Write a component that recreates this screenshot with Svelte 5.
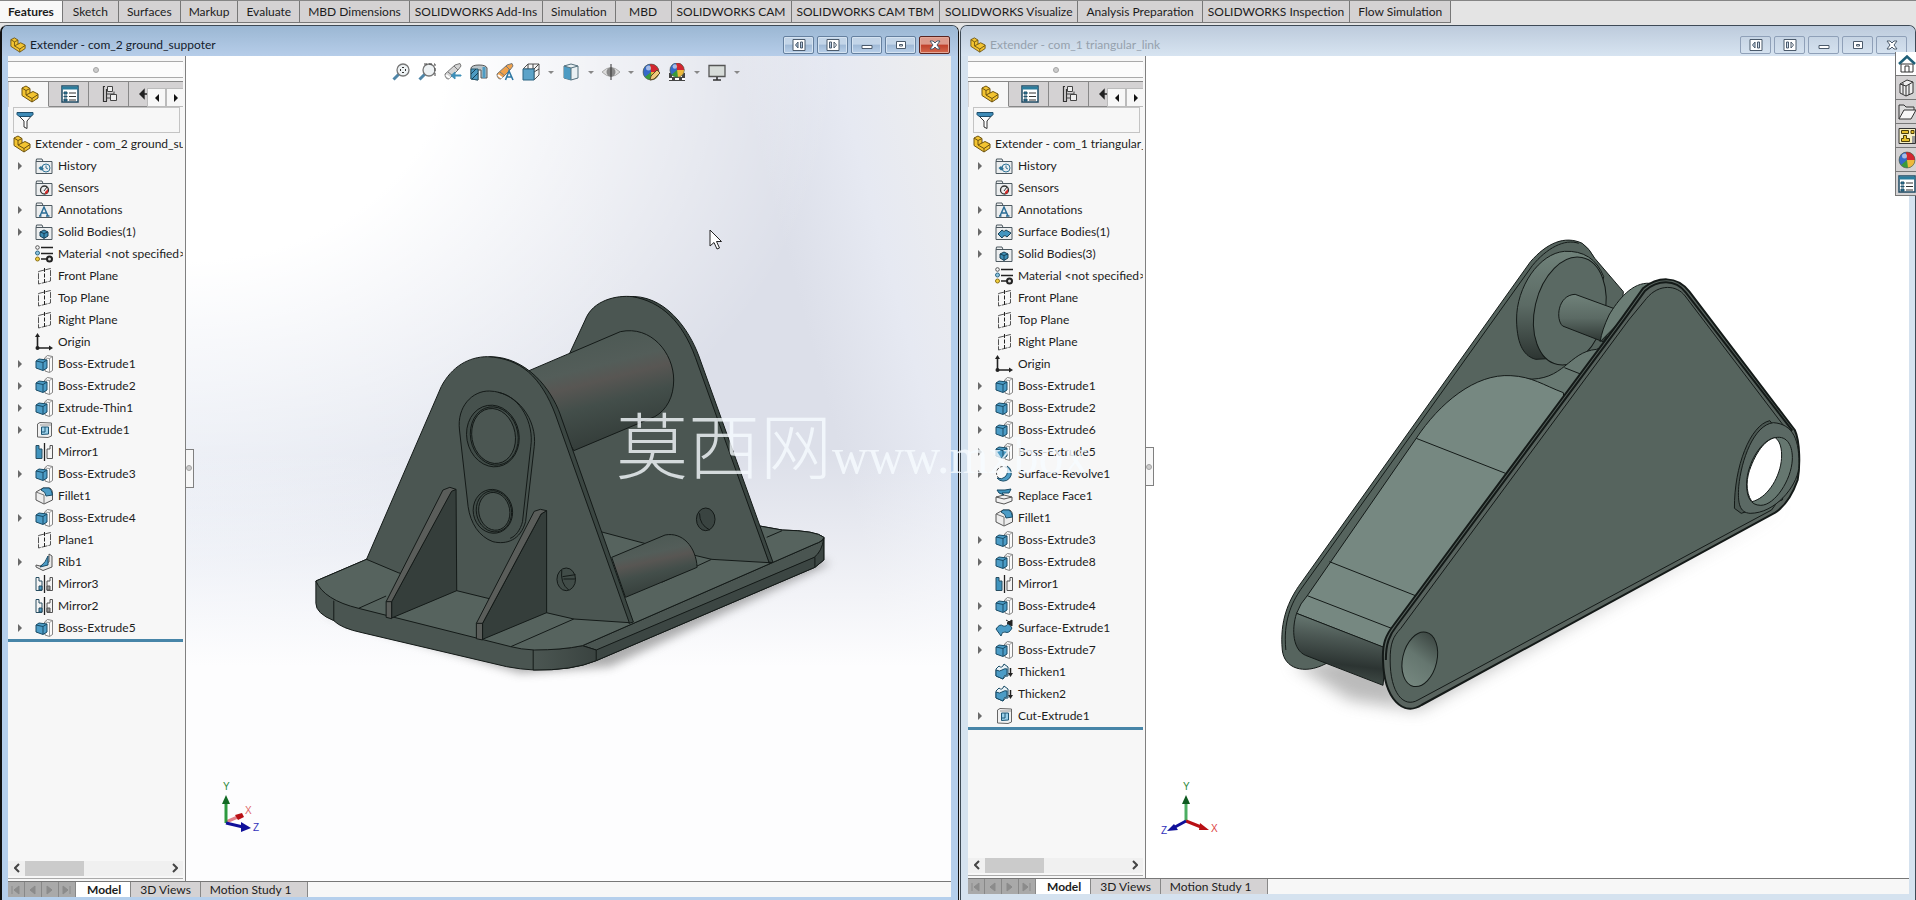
<script lang="ts">
	type Row = [icon: string, label: string, expandable?: boolean];

	const ribbonTabs = [
		'Features',
		'Sketch',
		'Surfaces',
		'Markup',
		'Evaluate',
		'MBD Dimensions',
		'SOLIDWORKS Add-Ins',
		'Simulation',
		'MBD',
		'SOLIDWORKS CAM',
		'SOLIDWORKS CAM TBM',
		'SOLIDWORKS Visualize',
		'Analysis Preparation',
		'SOLIDWORKS Inspection',
		'Flow Simulation'
	];

	const groundRows: Row[] = [
		['history', 'History', true],
		['sensors', 'Sensors'],
		['annotations', 'Annotations', true],
		['solid', 'Solid Bodies(1)', true],
		['material', 'Material <not specified>'],
		['plane', 'Front Plane'],
		['plane', 'Top Plane'],
		['plane', 'Right Plane'],
		['origin', 'Origin'],
		['boss', 'Boss-Extrude1', true],
		['boss', 'Boss-Extrude2', true],
		['boss', 'Extrude-Thin1', true],
		['cut', 'Cut-Extrude1', true],
		['mirror', 'Mirror1'],
		['boss', 'Boss-Extrude3', true],
		['fillet', 'Fillet1'],
		['boss', 'Boss-Extrude4', true],
		['plane', 'Plane1'],
		['rib', 'Rib1', true],
		['mirrorFeature', 'Mirror3'],
		['mirrorFeature', 'Mirror2'],
		['boss', 'Boss-Extrude5', true]
	];

	const linkRows: Row[] = [
		['history', 'History', true],
		['sensors', 'Sensors'],
		['annotations', 'Annotations', true],
		['surface', 'Surface Bodies(1)', true],
		['solid', 'Solid Bodies(3)', true],
		['material', 'Material <not specified>'],
		['plane', 'Front Plane'],
		['plane', 'Top Plane'],
		['plane', 'Right Plane'],
		['origin', 'Origin'],
		['boss', 'Boss-Extrude1', true],
		['boss', 'Boss-Extrude2', true],
		['boss', 'Boss-Extrude6', true],
		['boss', 'Boss-Extrude5', true],
		['revolve', 'Surface-Revolve1', true],
		['replace', 'Replace Face1'],
		['fillet', 'Fillet1'],
		['boss', 'Boss-Extrude3', true],
		['boss', 'Boss-Extrude8', true],
		['mirror', 'Mirror1'],
		['boss', 'Boss-Extrude4', true],
		['surfaceExtrude', 'Surface-Extrude1', true],
		['boss', 'Boss-Extrude7', true],
		['thicken', 'Thicken1'],
		['thicken', 'Thicken2'],
		['cut', 'Cut-Extrude1', true]
	];

	const windows = [
		{ id: 'ground', title: 'Extender - com_2 ground_suppoter', rows: groundRows },
		{ id: 'link', title: 'Extender - com_1 triangular_link', rows: linkRows }
	];

	// second value: has a drop-down arrow
	const viewTools: [string, string, boolean][] = [
		['zoomFit', 'Zoom to Fit', false],
		['zoomArea', 'Zoom to Area', false],
		['previous', 'Previous View', false],
		['section', 'Section View', false],
		['dynamic', 'Dynamic Annotation Views', false],
		['orientation', 'View Orientation', true],
		['display', 'Display Style', true],
		['eye', 'Hide/Show Items', true],
		['appearance', 'Edit Appearance', false],
		['scene', 'Apply Scene', true],
		['monitor', 'View Settings', true]
	];

	const captionButtons = ['Tile left', 'Tile right', 'Minimize', 'Restore', 'Close'];
	const taskTabs = [
		['home', 'Resources'],
		['library', 'Design Library'],
		['folderOpen', 'File Explorer'],
		['palette', 'View Palette'],
		['ball', 'Appearances'],
		['properties', 'Custom Properties']
	];

	let activeRibbon = $state('Features');
	let activeWindow = $state('ground');
	let activeTask = $state('home');
</script>

{#snippet folder()}
	<path d="M1 4.500V16.500H17V4.500H8L7 2H1.500Z" fill="#eceeef" stroke="#4d5960" />
	<path d="M1 4.500H17" stroke="#4d5960" />
{/snippet}

{#snippet ball()}
	<circle cx="9" cy="9" r="8" fill="#3a9a3c" />
	<path d="M9 9L3 14A8 8 0 0 1 8 1Z" fill="#3569c9" />
	<path d="M9 9L8 1A8 8 0 0 1 17 9Z" fill="#d3262f" />
	<path d="M9 9L17 9A8 8 0 0 1 10 17Z" fill="#edb93c" />
	<circle cx="6.500" cy="5" r="2.500" fill="#fff" opacity=".55" />
	<circle cx="9" cy="9" r="8" fill="none" stroke="#555" stroke-width=".6" />
{/snippet}

{#snippet icon(name: string)}
	<svg class="icon" viewBox="0 0 18 18" fill="none" aria-hidden="true">
		{#if name === 'part'}
			<path d="M1 3L5 1L9 3.500V8L12 6.500L17 9V13L11 17L1 10.500Z" fill="#f3c431" stroke="#6d5310" />
			<path d="M1 3L5 5.500V10L11 13.500V17M5 5.500L9 3.500M11 13.500L17 9.500M5 10L9 8" stroke="#6d5310" />
		{:else if name === 'history'}
			{@render folder()}
			<circle cx="11" cy="11" r="4" stroke="#2f7397" />
			<path d="M11 8.500V11L13 12" stroke="#2f7397" />
			<path d="M3.500 11L6 9L9 12L6 13.500Z" fill="#2f7397" />
		{:else if name === 'sensors'}
			{@render folder()}
			<circle cx="9.500" cy="11" r="4" stroke="#333" stroke-width="1.300" />
			<path d="M9 12L12 8" stroke="#333" />
			<path d="M10 13L13 10V14L10 15Z" fill="#d22b2b" />
		{:else if name === 'annotations'}
			{@render folder()}
			<path d="M5 15L9 6L13 15M7 12H11.500M4 15H6.500M11 15H14.500" stroke="#2b6d96" stroke-width="1.500" />
		{:else if name === 'solid'}
			{@render folder()}
			<path d="M5 9L9 7L13 9V13L9 15.500L5 13Z" fill="#3c8db5" stroke="#173f55" />
			<path d="M5 9L9 10.500L13 9M9 10.500V15" stroke="#173f55" />
		{:else if name === 'surface'}
			{@render folder()}
			<path d="M3 11L7 7Q9 10 11 7L16 10L12 14Q9 11 7 15Z" fill="#4295c0" stroke="#173f55" />
		{:else if name === 'material'}
			<path d="M6 2.500H18M6 8.500H18M6 14H12" stroke="#222" stroke-width="1.600" />
			<circle cx="2.500" cy="2.500" r="1.800" stroke="#555" />
			<circle cx="2.500" cy="8" r="2" fill="#8cc3df" stroke="#2f6985" />
			<circle cx="2.500" cy="14" r="2" fill="#f2cf3e" stroke="#8c7217" />
			<circle cx="14.500" cy="14" r="2.500" fill="#ddd" stroke="#222" stroke-width="2" />
		{:else if name === 'plane'}
			<path d="M3.500 4.500L15.500 1.500V14L3.500 17Z" stroke="#555" stroke-dasharray="6 1" />
			<path d="M9.500 1V17.500" stroke="#222" stroke-dasharray="4 1.500" />
		{:else if name === 'origin'}
			<path d="M2.500 3V15H15" stroke="#222" stroke-width="1.600" />
			<path d="M0 4L2.500 0L5 4ZM14 12.500L18 15L14 17.500Z" fill="#222" />
			<circle cx="2.500" cy="15" r="2" fill="#222" />
		{:else if name === 'boss'}
			<path d="M9.500 3L12.500 .5L17.500 1.500V15.500L14.500 17.500L10 16Z" fill="#fafafa" stroke="#666" stroke-width=".8" />
			<path d="M14.500 3.500V17M10 3L14.500 3.500L17.500 1.500" stroke="#888" stroke-width=".8" />
			<path d="M1 6L4 4L12 5V13L8 15.500L1 13Z" fill="#4c9cc6" stroke="#184b66" />
			<path d="M1 6L8 7.500L12 5M8 7.500V15" stroke="#184b66" />
		{:else if name === 'cut'}
			<path d="M2.500 3L5 1.500L16.500 2V15L13 16.500L2.500 16Z" fill="#f1f1f1" stroke="#666" />
			<path d="M5 4H16" stroke="#999" />
			<path d="M6.500 6H13.500V13L6.500 13.500Z" fill="#9bd0ea" stroke="#1d5675" />
			<path d="M10 6V11H6.500" stroke="#1d5675" />
		{:else if name === 'mirror' || name === 'mirrorFeature'}
			<path d="M1 2.500H4V6H7V15.500H1Z" fill={name === 'mirror' ? '#3f93bd' : '#f4f4f4'} stroke="#264c60" />
			<path d="M17.500 2.500H15V6H12V15.500H17.500Z" fill="#f4f4f4" stroke="#555" />
			<path d="M9.500 0V18" stroke="#222" stroke-width="1.300" />
			{#if name === 'mirrorFeature'}
				<path d="M4 11H7V15H4Z" fill="#4c9cc6" stroke="#264c60" />
				<path d="M12 11H15V15H12Z" fill="#999" stroke="#555" />
			{/if}
		{:else if name === 'fillet'}
			<path d="M1 5L8 1H15Q17.500 3 17.500 6V13L9 17L1 13Z" fill="#ededed" stroke="#555" />
			<path d="M8 1L14 1Q17 3 17.500 8L11 9Q11 5 6 3Z" fill="#4c9cc6" stroke="#184b66" />
			<path d="M1 5L9 8V17" stroke="#777" />
		{:else if name === 'rib'}
			<path d="M14 1L17 3V14L8 17.500L1 14V12L5 13L14 9Z" fill="#e8e8e8" stroke="#555" />
			<path d="M13 3V12L5 14Q11 9 13 3Z" fill="#4c9cc6" stroke="#184b66" />
		{:else if name === 'revolve'}
			<circle cx="8" cy="8" r="6.500" fill="#fafafa" stroke="#444" stroke-dasharray="3 1.500" />
			<path d="M12 1A8 8 0 1 1 2 13Q7 15 10 12Q14 8 12 1Z" fill="#4c9cc6" stroke="#184b66" />
		{:else if name === 'replace'}
			<path d="M1 10L9 8L17 10V14L9 17L1 15Z" fill="#f1f1f1" stroke="#555" />
			<path d="M1 10L9 12L17 10" stroke="#555" />
			<path d="M2 3H10L16 2L14 6H7L9 8L4 6Z" fill="#3f93bd" stroke="#184b66" />
		{:else if name === 'surfaceExtrude'}
			<path d="M1 10Q5 4 8 7Q12 8 13 4L17 9Q14 15 10 13Q7 12 6 17Z" fill="#4c9cc6" stroke="#184b66" />
			<path d="M11 1L16 4M17 1V7L12 4Z" fill="#222" stroke="#222" />
		{:else if name === 'thicken'}
			<path d="M1 6L4 3Q7 6 9 1L13 4V13Q10 12 8 16L1 13Z" fill="#e9f2f6" stroke="#184b66" />
			<path d="M1 7Q5 9 7 7Q10 5 12 6V12Q9 11 8 16L1 13Z" fill="#4c9cc6" stroke="#184b66" />
			<path d="M15.500 5V11" stroke="#222" stroke-width="1.500" />
			<path d="M13 10H18L15.500 14Z" fill="#222" />
		{:else if name === 'properties'}
			<path d="M1 1H17V17H1Z" fill="#fff" stroke="#1f4a63" stroke-width="1.500" />
			<path d="M1 3H17" stroke="#2b7d9d" stroke-width="3" />
			<path d="M3 7H6V9H3ZM3 11H6V12H3ZM3 14H6V16H3Z" fill="#2e86ab" stroke="#1f4a63" />
			<path d="M8 8H15M8 11.500H15M8 15H15" stroke="#333" />
		{:else if name === 'config'}
			<path d="M2.500 1V17M2.500 1.500H4M2.500 16.500H6M5.500 4V16" stroke="#333" stroke-width="1.200" />
			<path d="M6.500 1.500H11.500V6.500H6.500ZM9.500 9.500H15.500V15.500H9.500Z" fill="#eee" stroke="#444" />
			<path d="M6 9H13V6.500M6 13H9" stroke="#444" />
		{:else if name === 'dim'}
			<path d="M9 3V15M1 9H9M5 5L1 9L5 13Z" stroke="#222" stroke-width="1.400" fill="#222" />
		{:else if name === 'filter'}
			<path d="M1 3L8 10V16L11 17.500V10L17 3" fill="#fff" stroke="#333" />
			<path d="M1 1.500H17V3.500L15 5.500H3L1 3.500Z" fill="#3e8bb7" stroke="#1f4f6c" />
		{:else if name === 'zoomFit' || name === 'zoomArea'}
			<path d="M7 11L1.500 16.500" stroke="#4f86a8" stroke-width="3" />
			<circle cx="11" cy="7" r="6" fill="#eef2f4" stroke="#777" stroke-width="1.300" />
			{#if name === 'zoomFit'}
				<path d="M8 7H9M13 7H14M11 4V5M11 9V10" stroke="#333" stroke-width="2" />
			{:else}
				<path d="M6 1H17V13" stroke="#444" stroke-dasharray="3 2" />
			{/if}
		{:else if name === 'previous' || name === 'dynamic'}
			<path d="M1 11L11 2L16 .500L17 3L14 7L5 16Q1 16 1 11Z" fill={name === 'dynamic' ? '#f0a24c' : '#d4d4d4'} stroke="#777" />
			<path d="M4 9L9 13M10 3L14 7" stroke="#777" />
			<path d="M2 12L6 15" stroke="#fff" stroke-width="2" />
			{#if name === 'previous'}
				<path d="M17 13H11V16L7 12.500L11 9V12H17Z" fill="#3f8fb8" stroke="#3f8fb8" />
			{:else}
				<path d="M9.500 17L13 8L17 17M11 14H16" stroke="#2d77a3" stroke-width="1.600" />
			{/if}
		{:else if name === 'section'}
			<path d="M1 5Q2 2 9 2Q16 2 17 5V15L11 15V7H8V17L1 16Z" fill="#b9c3c8" stroke="#555" />
			<path d="M1 6H8V17L1 16Z" fill="#4d9bc3" stroke="#24586f" />
			<path d="M1 11L6 6M2 16L8 10" stroke="#173f55" />
			<path d="M14 4V15" stroke="#4d9bc3" stroke-width="3" />
		{:else if name === 'orientation'}
			<path d="M1 6L6 1H17V12L12 17V6Z" fill="#f5f5f5" stroke="#555" />
			<path d="M12 6L17 1M6 1V6M11 1V6M12 9L17 6" stroke="#444" />
			<path d="M1 6H12V17H1Z" fill="#5ba3c9" stroke="#2d6482" />
		{:else if name === 'display'}
			<path d="M2 3L9 1L16 3V15L9 17L2 15Z" fill="#e9f0f3" stroke="#55707d" />
			<path d="M2 3L9 5V17L2 15Z" fill="#4d9bc3" />
			<path d="M2 3L9 5L16 3M9 5V17" stroke="#55707d" />
		{:else if name === 'eye'}
			<path d="M0 9Q9 0 18 9Q9 18 0 9Z" fill="#dcdcdc" stroke="#aaa" />
			<circle cx="9" cy="9" r="4.500" fill="#888" />
			<path d="M9 1V17" stroke="#333" />
		{:else if name === 'appearance'}
			{@render ball()}
			<path d="M8 17L9 13L15 7L18 10L12 16Z" fill="#efc97d" stroke="#5c4a28" />
		{:else if name === 'scene'}
			<path d="M1 10H17V18H1Z" fill="#444" />
			<path d="M4 12H7V14H4ZM11 12H14V14H11ZM1 15H4V17H1ZM14 15H17V17H14ZM7 15H11V17H7Z" fill="#fff" />
			<g transform="translate(1 -1) scale(.9)">{@render ball()}</g>
		{:else if name === 'monitor'}
			<path d="M1 2.500H17V13.500H1Z" fill="#d7dcd9" stroke="#555" stroke-width="1.300" />
			<path d="M9 14V17M5 17H13" stroke="#333" stroke-width="1.600" />
		{:else if name === 'home'}
			<path d="M3 9H15V17H3Z" fill="#fff" stroke="#333" />
			<path d="M7 17V11H11V17" stroke="#333" />
			<path d="M1 9L9 1.500L17 9" stroke="#1f5f78" stroke-width="2.500" />
		{:else if name === 'library'}
			<path d="M2 5L9 1L15 3V14L8 17L2 14Z" fill="#eee" stroke="#333" />
			<path d="M2 5L8 7L15 3M8 7V17M5 4V15M11 5V16" stroke="#333" />
		{:else if name === 'folderOpen'}
			<path d="M1 16V2H6L8 4H16V7" fill="#ddd" stroke="#333" />
			<path d="M1 16L6 7H18L13 16Z" fill="#f7f7f7" stroke="#333" />
		{:else if name === 'palette'}
			<path d="M1 1.500H17.500V16.500H1Z" fill="#f7f0c5" stroke="#333" />
			<path d="M3.500 3.500H10.500V6.500H3.500ZM13 3.500H16V6.500H13ZM3.500 14.500V11.500H5.500V8.500H8.500V11.500H11.500V14.500Z" fill="#e7c12d" stroke="#4c3f0a" />
			<path d="M14 9H17V16H14Z" fill="#999" />
		{:else if name === 'ball'}
			{@render ball()}
		{/if}
	</svg>
{/snippet}

{#snippet captionGlyph(i: number)}
	<svg width="14" height="12" viewBox="0 0 14 12" fill="#fff" stroke="#4b5a6b" aria-hidden="true">
		{#if i === 0}
			<path d="M1 .5H13V11.500H1ZM8.500 3V9H10.500V3ZM6 3L3.500 6L6 9Z" />
		{:else if i === 1}
			<path d="M1 .5H13V11.500H1ZM3.500 3V9H5.500V3ZM8 3L10.500 6L8 9Z" />
		{:else if i === 2}
			<path d="M2 6.500H12V9.500H2Z" />
		{:else if i === 3}
			<path d="M2.500 2.500H11.500V9.500H2.500ZM5.500 5.500H8.500V7H5.500Z" />
		{:else}
			<path d="M2 2H5L7 4L9 2H12L9 6L12 10H9L7 8L5 10H2L5 6Z" />
		{/if}
	</svg>
{/snippet}

{#snippet groundModel()}
	<svg class="model ground" viewBox="-3 -63 1568 1260" preserveAspectRatio="none" role="img" aria-label="Ground supporter">
		<defs>
			<linearGradient id="pin" x1="0.350" y1="0" x2="0.650" y2="1">
				<stop offset="0" stop-color="#4b5853" />
				<stop offset=".3" stop-color="#535d59" />
				<stop offset=".42" stop-color="#585653" />
				<stop offset=".6" stop-color="#434e4a" />
				<stop offset="1" stop-color="#303835" />
			</linearGradient>
			<linearGradient id="corner" x1="0" x2="1">
				<stop offset="0" stop-color="#4b5652" />
				<stop offset="1" stop-color="#3a4340" />
			</linearGradient>
			<filter id="soft"><feGaussianBlur stdDeviation="14" /></filter>
		</defs>
		<path class="shade" d="M60 1000L640 1180L900 1160L1540 850L1400 800L700 1100Z" />
		<g class="lines">
			<path fill="#4a5551" d="M46 903L193 838L880 750L1335 738L1400 750Q1500 752 1521 772V840L1495 862L860 1142Q790 1172 680 1170Q640 1168 600 1160L180 1058Q120 1045 98 1022Q46 1000 46 970Z" />
			<path fill="#3c4643" d="M820 1097L858 1108L1495 830L1521 772V840L1495 862L860 1142Z" />
			<path fill="#4a5551" d="M820 1097L1495 792Q1518 784 1521 775Q1515 815 1493 832L860 1110Z" />
			<path fill="url(#corner)" d="M677 1108Q760 1110 820 1097L860 1110V1142Q790 1172 677 1170Z" />
			<path fill="#56635e" d="M46 903L193 838L880 750L1335 738L1400 750Q1500 752 1521 772Q1518 784 1495 792L820 1097Q760 1110 680 1110Q640 1108 612 1100L170 985Q70 960 46 903Z" />
			<path d="M98 962V1022M1495 832V862M1400 752L1355 772M170 985L250 948" fill="none" />
			<path fill="#3b4642" d="M950 50C1060 40 1130 150 1158 228L1373 846L1362 850L1145 235Z" />
			<path fill="#4b5652" d="M700 700L782 222L828 120C850 60 920 45 965 50C1050 65 1110 125 1148 232L1362 848L1195 838L1000 790L880 757Z" />
			<ellipse fill="#3a4441" cx="1178" cy="718" rx="27" ry="34" />
			<path d="M1160 700Q1160 735 1190 750M1050 907L1195 838" fill="none" />
			<path fill="url(#pin)" d="M665 272L930 155C1020 135 1085 220 1085 300C1085 350 1065 390 1030 410L795 512Z" />
			<path fill="url(#pin)" d="M905 832L1060 765C1110 755 1150 800 1153 862L945 952Z" />
			<path fill="#3b4642" d="M550 230C660 230 730 330 755 402L968 1026L955 1030L700 420Z" />
			<path fill="#4b5652" d="M193 838L410 320C440 260 490 230 545 230C640 235 700 290 742 405L956 1028L795 1017L715 998L455 932L285 878Z" />
			<path d="M463 450C455 380 500 332 550 333C630 335 690 420 680 500L655 725C640 780 600 795 560 785C520 770 495 730 488 680Z" fill="#46514d" />
			<path d="M575 337C640 350 680 430 670 500L646 725C640 750 625 770 610 775" fill="none" />
			<ellipse fill="#404b47" cx="560" cy="468" rx="76" ry="93" transform="rotate(-10 560 468)" />
			<ellipse fill="#4b5652" cx="562" cy="468" rx="63" ry="83" transform="rotate(-10 562 468)" />
			<ellipse cx="564" cy="468" rx="69" ry="88" fill="none" transform="rotate(-10 564 468)" />
			<ellipse fill="#404b47" cx="560" cy="694" rx="57" ry="66" transform="rotate(-10 560 694)" />
			<ellipse fill="#4b5652" cx="564" cy="694" rx="45" ry="57" transform="rotate(-10 564 694)" />
			<ellipse cx="563" cy="694" rx="51" ry="62" fill="none" transform="rotate(-10 563 694)" />
			<ellipse fill="#414c48" cx="773" cy="898" rx="27" ry="34" />
			<path d="M760 870Q755 910 780 930M762 890L800 884M765 897H800" fill="none" />
			<path fill="#353e3b" d="M440 632L453 628L455 932L266 1014V965Z" />
			<path fill="#5a5d5a" d="M415 630L435 622L453 628L440 634L266 965V1016L250 1012V965Z" />
			<path fill="#353e3b" d="M700 702L716 692V998L530 1078V1030Z" />
			<path fill="#5a5d5a" d="M680 694L698 688L716 692L700 702L530 1030V1080L512 1076V1030Z" />
			<path d="M612 1100L795 1017M250 965H266M512 1030H530M1360 846L1372 848" fill="none" />
		</g>
	</svg>
{/snippet}

{#snippet linkModel()}
	<svg class="model link" viewBox="-36 -9 1568 1500" preserveAspectRatio="none" role="img" aria-label="Triangular link">
		<defs>
			<linearGradient id="barrel" x1=".55" y1="0" x2=".4" y2="1">
				<stop offset="0" stop-color="#6f817a" />
				<stop offset=".35" stop-color="#4c5854" />
				<stop offset=".7" stop-color="#2c3432" />
				<stop offset="1" stop-color="#46524d" />
			</linearGradient>
			<linearGradient id="bore" x1=".7" y1="0" x2=".4" y2="1">
				<stop offset="0" stop-color="#3b4541" />
				<stop offset=".5" stop-color="#65766f" />
				<stop offset="1" stop-color="#75877f" />
			</linearGradient>
			<linearGradient id="disc" x1="0" y1="0" x2="0" y2="1">
				<stop offset="0" stop-color="#70827a" />
				<stop offset=".5" stop-color="#5b6a64" />
				<stop offset="1" stop-color="#2d3532" />
			</linearGradient>
			<filter id="softer"><feGaussianBlur stdDeviation="24" /></filter>
		</defs>
		<path class="shade far" d="M90 1330L350 1300L400 1440L1480 850L1430 880L440 1470L250 1440Z" />
		<g class="lines">
			<path fill="#56645e" d="M60 1290C52 1200 80 1140 105 1100L755 125C800 70 850 45 900 70Q920 85 935 115L1015 215L1000 400L350 1270L180 1332C120 1365 65 1345 60 1290Z" />
			<path d="M70 1290C62 1205 85 1150 112 1108L760 137C800 85 850 55 890 70" fill="none" />
			<path fill="url(#disc)" d="M850 94C780 100 715 200 716 300C717 380 740 410 770 418L900 410L960 170Q930 90 850 94Z" />
			<ellipse fill="#5a6963" cx="865" cy="273" rx="98" ry="164" transform="rotate(12 865 273)" />
			<path fill="#687972" d="M740 477C850 485 860 395 940 388L1000 360L850 620L800 500Z" />
			<path d="M850 443L895 462" fill="none" />
			<path fill="url(#disc)" d="M880 223L1000 270L960 366L845 318C825 300 830 225 880 223Z" />
			<path fill="#6b7d75" d="M1090 190C1040 185 1000 240 975 285Q955 330 950 365L1010 300L1100 200Z" />
			<path fill="#768881" d="M435 655C500 550 600 460 700 467C760 470 790 495 847 518L850 560L345 1290L350 1285L100 1180Q110 1150 130 1127Z" />
			<path fill="url(#barrel)" d="M100 1180L352 1285L342 1396L125 1306C90 1290 85 1230 100 1180Z" />
			<path d="M435 655L685 760M192 1025L440 1130M130 1127L378 1230" fill="none" />
			<path fill="#59645f" stroke-width="2" d="M342 1320C340 1270 350 1245 372 1215L1010 295L1070 205C1110 170 1165 165 1200 215L1495 630C1510 665 1510 740 1503 780Q1480 850 1440 878L450 1455C400 1490 345 1440 342 1320Z" />
			<path d="M350 1320C350 1270 360 1245 380 1218L1018 298L1076 212C1110 180 1160 175 1190 218L1488 632" fill="none" stroke-width="2" />
			<path fill="#56645e" d="M362 1320C362 1270 370 1250 392 1225L1030 300L1080 235C1115 190 1165 195 1188 228L1480 640L1490 780L1430 870L440 1440C400 1465 362 1420 362 1320Z" />
			<path fill="#4a5651" d="M1425 602C1370 615 1325 740 1326 865L1345 880L1460 840L1490 690Z" />
			<path fill="#5b6964" d="M1435 608C1490 612 1510 660 1506 745C1500 800 1440 880 1370 880C1340 878 1335 850 1338 800C1345 720 1380 615 1435 608Z" />
			<path fill="#667770" d="M1440 653C1475 645 1490 680 1488 720C1485 780 1440 855 1400 856C1370 856 1360 830 1360 790C1362 730 1400 660 1440 653Z" />
			<path fill="#fff" d="M1440 653C1458 665 1460 700 1457 725C1450 780 1415 835 1375 845C1355 815 1360 770 1372 740C1390 690 1415 658 1440 653Z" />
			<ellipse fill="url(#bore)" cx="445" cy="1318" rx="48" ry="83" transform="rotate(12 445 1318)" />
		</g>
	</svg>
{/snippet}

{#snippet triad(id: string)}
	{#if id === 'ground'}
		<svg class="triad" width="54" height="58" viewBox="0 0 54 58" aria-hidden="true">
			<path d="M10 43L24 37" stroke="#e27f88" stroke-width="3" />
			<path d="M19 36L26 34L28 38L22 41Z" fill="#b80f14" />
			<path d="M10 44V24" stroke="#2d9a3f" stroke-width="3" />
			<path d="M6 25L10 16L14 25Z" fill="#126a24" />
			<path d="M10 44L27 48" stroke="#10109a" stroke-width="3" />
			<path d="M25 43L35 49L25 53Z" fill="#10109a" />
			<text x="7" y="11" fill="#2a8a36">Y</text>
			<text x="29" y="35" fill="#d66">X</text>
			<text x="37" y="52" fill="#33b">Z</text>
		</svg>
	{:else}
		<svg class="triad" width="60" height="58" viewBox="0 0 60 58" aria-hidden="true">
			<path d="M28 41V24" stroke="#4cae62" stroke-width="3" />
			<path d="M24 24L28 15L32 24Z" fill="#0e5a20" />
			<path d="M28 41L43 47" stroke="#b80f14" stroke-width="3" />
			<path d="M42 43L51 50L41 50Z" fill="#b80f14" />
			<path d="M28 41L17 47" stroke="#10109a" stroke-width="3" />
			<path d="M16 44L20 50L9 51Z" fill="#10109a" />
			<text x="25" y="10" fill="#2a8a36">Y</text>
			<text x="53" y="52" fill="#d44">X</text>
			<text x="3" y="54" fill="#33b">Z</text>
		</svg>
	{/if}
{/snippet}

<div class="app">
	<nav class="ribbon">
		{#each ribbonTabs as tab}
			<button
				class:active={tab === activeRibbon}
				class:product={tab.startsWith('SOLIDWORKS')}
				onclick={() => (activeRibbon = tab)}
			>
				{tab}
			</button>
		{/each}
	</nav>

	<main class="workspace">
		{#each windows as win (win.id)}
			<section class="window {win.id}" class:focused={activeWindow === win.id}>
				<header class="titlebar">
					{@render icon('part')}
					<h2>{win.title}</h2>
					<div class="caption">
						{#each captionButtons as label, i}
							<button class:close={label === 'Close'} aria-label={label}>{@render captionGlyph(i)}</button>
						{/each}
					</div>
				</header>

				<div class="document">
					<aside class="panel">
						<div class="grip"><span></span></div>
						<div class="manager">
							<button class="active" aria-label="Feature tree">{@render icon('part')}</button>
							<button aria-label="Properties">{@render icon('properties')}</button>
							<button aria-label="Configurations">{@render icon('config')}</button>
							<button class="cut-off" aria-label="Dimensions">{@render icon('dim')}</button>
							<button class="step" aria-label="Scroll tabs left"><i class="left"></i></button>
							<button class="step" aria-label="Scroll tabs right"><i class="right"></i></button>
						</div>
						<label class="filter">
							{@render icon('filter')}
							<input type="text" aria-label="Filter" />
						</label>
						<div class="root">{@render icon('part')}<span>{win.title}</span></div>
						<ul class="tree">
							{#each win.rows as [kind, label, expandable]}
								<li>
									{#if expandable}
										<button class="expand" aria-label="Expand {label}"></button>
									{:else}
										<span class="expand-space"></span>
									{/if}
									{@render icon(kind)}
									<span>{label}</span>
								</li>
							{/each}
						</ul>
						<div class="rollback"></div>
						<div class="hscroll">
							<button aria-label="Scroll left"><svg width="6" height="10" viewBox="0 0 6 10"><path d="M5 1L1 5L5 9" /></svg></button>
							<div class="track"><div class="thumb"></div></div>
							<button aria-label="Scroll right"><svg width="6" height="10" viewBox="0 0 6 10"><path d="M1 1L5 5L1 9" /></svg></button>
						</div>
					</aside>

					<div class="viewport">
						<button class="handle" aria-label="Collapse panel"><span></span></button>
						{#if win.id === 'ground'}
							<div class="view-tools">
								{#each viewTools as [kind, label, drop]}
									<button class="tool" aria-label={label}>{@render icon(kind)}</button>
									{#if drop}
										<button class="drop" aria-label="{label} options"></button>
									{/if}
								{/each}
							</div>
							{@render groundModel()}
							<svg class="cursor" width="14" height="22" viewBox="0 0 14 22" aria-hidden="true">
								<path d="M1 1V17L5 13.500L8 20L10.500 19L7.500 12.500H12.500Z" fill="#fff" stroke="#222" />
							</svg>
						{:else}
							{@render linkModel()}
						{/if}
						{@render triad(win.id)}
					</div>
				</div>

				<footer class="sheets">
					{#each ['M4 2V10M11 2L6 6L11 10Z', 'M10 2L5 6L10 10Z', 'M5 2L10 6L5 10Z', 'M11 2V10M4 2L9 6L4 10Z'] as d}
						<button class="jump" aria-label="Scroll sheets"><svg width="15" height="12" viewBox="0 0 15 12"><path {d} /></svg></button>
					{/each}
					<button class="sheet current">Model</button>
					<button class="sheet">3D Views</button>
					<button class="sheet last">Motion Study 1</button>
				</footer>
			</section>
		{/each}
	</main>

	<nav class="task-pane">
		{#each taskTabs as [kind, label]}
			<button class:active={kind === activeTask} aria-label={label} onclick={() => (activeTask = kind)}>
				{@render icon(kind)}
			</button>
		{/each}
	</nav>

	<div class="watermark">莫西网<span>www.mxbox</span></div>
</div>

<style>
	:global(body) {
		margin: 0;
		overflow: hidden;
	}

	.app {
		position: relative;
		display: flex;
		flex-direction: column;
		height: 100vh;
		overflow: hidden;
		background: #e4e4e4;
		color: #1c1c1c;
		font: 12px/16px Lato, 'Open Sans', sans-serif;
	}

	button {
		padding: 0;
		border: 0;
		background: none;
		color: inherit;
		font: inherit;
	}

	.icon {
		display: block;
		flex: none;
		width: 18px;
		height: 18px;
	}

	.ribbon {
		display: flex;
		height: 23px;
		margin-bottom: 2px;
		border-top: 1px solid #858585;
		box-sizing: border-box;
	}

	.ribbon button {
		min-width: 56px;
		padding: 0 8px;
		border-right: 1px solid #777;
		border-bottom: 1px solid #777;
		background: #d4d2d3;
		white-space: nowrap;
	}

	.ribbon button.product {
		padding: 0 5px;
	}

	.ribbon button.active {
		background: #f8f8f8;
		font-weight: 700;
	}

	.workspace {
		display: grid;
		flex: 1;
		grid-template-columns: minmax(0, 959fr) minmax(0, 956fr);
		gap: 1px;
		min-height: 0;
	}

	.window {
		display: flex;
		flex-direction: column;
		min-height: 0;
		padding: 0 6px 6px 7px;
		border: 1px solid #3e4a56;
		border-bottom: 0;
		border-radius: 7px 7px 0 0;
		background: #d5e2ef;
	}

	.window.ground {
		padding: 0 7px 3px 6px;
		border-left: 2px solid #111;
		border-right-color: #111;
	}

	.window.focused {
		background: #b5cfec;
	}

	.titlebar {
		display: flex;
		align-items: center;
		gap: 4px;
		height: 30px;
		margin: 0 -6px 0 -7px;
		padding: 7px 8px 0 9px;
		border-radius: 6px 6px 0 0;
		box-sizing: border-box;
		background: linear-gradient(#bdcbdc, #d7e4f1);
	}

	.ground .titlebar {
		margin: 0 -7px 0 -6px;
		padding-left: 8px;
	}

	.titlebar .icon {
		width: 16px;
		height: 16px;
	}

	.focused .titlebar {
		background: linear-gradient(#9bb7d3, #b6cde9);
	}

	h2 {
		flex: 1;
		margin: 0;
		color: #95a1ad;
		font: inherit;
	}

	.focused h2 {
		color: #14202c;
	}

	.caption {
		display: flex;
		gap: 3px;
	}

	.caption button {
		display: grid;
		place-items: center;
		width: 31px;
		height: 18px;
		border: 1px solid #8fa0b8;
		border-radius: 2px;
	}

	.focused .caption button {
		border-color: #65809f;
		background: linear-gradient(#c3d5e8 45%, #9fb9d6 50%, #b9d0ea);
		box-shadow: inset 0 0 0 1px #d5e3f1;
	}

	.focused .caption .close {
		border-color: #5a2420;
		background: linear-gradient(#dd9a8c 45%, #c0412c 50%, #d4684c);
		box-shadow: inset 0 0 0 1px #e5a898;
	}

	.document {
		display: flex;
		flex: 1;
		min-height: 0;
	}

	.panel {
		display: flex;
		flex: none;
		flex-direction: column;
		width: 178px;
		padding-right: 2px;
		border-right: 1px solid #808080;
		box-sizing: border-box;
		overflow: hidden;
		background: #f7f7f7;
	}

	.grip {
		display: grid;
		place-items: center;
		height: 15px;
		margin: 5px 0 3px;
		border: solid #aaa;
		border-width: 1px 0;
		background: #fcfcfc;
	}

	.grip span,
	.handle span {
		width: 6px;
		height: 6px;
		border: 1px solid #a5a5a5;
		border-radius: 50%;
		box-sizing: border-box;
		background: #ccc;
	}

	.manager {
		display: flex;
		align-items: flex-end;
		height: 26px;
		padding-left: 1px;
		border-top: 1px solid #888;
		box-sizing: border-box;
		overflow: hidden;
		background: #d4d2d3;
	}

	.manager button {
		display: grid;
		flex: none;
		place-items: center;
		width: 40px;
		height: 25px;
		padding-left: 3px;
		border-right: 1px solid #888;
		border-bottom: 1px solid #888;
		box-sizing: border-box;
	}

	.manager button.active {
		border-bottom-color: #f7f7f7;
		background: #f7f7f7;
	}

	.manager .cut-off {
		place-items: center start;
		width: 18px;
		padding-left: 10px;
		border-right: 0;
		overflow: hidden;
	}

	.manager .step {
		width: 19px;
		height: 19px;
		padding: 0;
		border: 1px solid #bbb;
		background: #f7f7f7;
	}

	.step i {
		border: 4px solid transparent;
	}

	.step .left {
		border-left-width: 0;
		border-right-color: #111;
	}

	.step .right {
		border-right-width: 0;
		border-left-color: #111;
	}

	.filter {
		display: flex;
		align-items: center;
		height: 24px;
		margin: 0 3px 0 5px;
		padding-left: 2px;
		border: 1px solid #c4c4c4;
	}

	.filter input {
		flex: 1;
		min-width: 0;
		border: 0;
		outline: 0;
		background: none;
		font: inherit;
	}

	.root,
	.tree li {
		display: flex;
		align-items: center;
		height: 22px;
		overflow: hidden;
		white-space: nowrap;
	}

	.root {
		gap: 4px;
		padding-left: 5px;
	}

	.tree {
		margin: 0;
		padding: 0;
		list-style: none;
	}

	.tree li {
		gap: 5px;
		padding-left: 10px;
	}

	.expand,
	.expand-space {
		flex: none;
		width: 12px;
		height: 8px;
	}

	.expand::before {
		display: block;
		width: 0;
		border: 4px solid transparent;
		border-left: 4px solid #6a6a6a;
		border-right: 0;
		content: '';
	}

	.rollback {
		flex: none;
		height: 3px;
		background: #4785a8;
	}

	.hscroll {
		display: flex;
		align-items: center;
		height: 15px;
		margin-top: auto;
		margin-bottom: 5px;
		background: #f0f0f0;
		box-shadow: 0 2px 0 #f7f7f7, 0 3px 0 #aaa;
	}

	.hscroll button {
		width: 17px;
	}

	.hscroll svg {
		fill: none;
		stroke: #444;
		stroke-width: 2;
	}

	.track {
		flex: 1;
	}

	.thumb {
		width: 42%;
		height: 15px;
		background: #cbcbcb;
	}

	.viewport {
		position: relative;
		display: flex;
		flex: 1;
		align-items: center;
		justify-content: center;
		min-width: 0;
		overflow: hidden;
		background: #fff;
	}

	.ground .viewport {
		background:
			linear-gradient(transparent 48%, #fdfdfe 74%),
			radial-gradient(ellipse 85% 62% at 0 0, #fff 40%, transparent 100%),
			linear-gradient(75deg, #e4e9f3 0, #dcdfe9 62%, #dcdfe9 78%, #e6e9f2 88%, #eeeeee);
	}

	.handle {
		position: absolute;
		left: -1px;
		top: calc(50% - 20px);
		display: grid;
		place-items: center;
		width: 9px;
		height: 39px;
		border: 1px solid #808080;
		border-left: 0;
		background: #f7f7f7;
	}

	.view-tools {
		position: absolute;
		top: 7px;
		display: flex;
		padding-left: 3px;
	}

	.tool {
		width: 26px;
	}

	.drop {
		width: 14px;
	}

	.drop::before {
		display: block;
		width: 0;
		border: 3px solid transparent;
		border-top-color: #888;
		border-bottom: 0;
		content: '';
	}

	.model {
		flex: none;
		width: 540px;
		height: 420px;
		overflow: visible;
	}

	.model.link {
		width: 560px;
		height: 500px;
	}

	.lines :global(*) {
		stroke: #141a18;
		stroke-linejoin: round;
		vector-effect: non-scaling-stroke;
	}

	.shade {
		fill: #777;
		opacity: 0.6;
		filter: url(#soft);
	}

	.shade.far {
		opacity: 0.5;
		filter: url(#softer);
	}

	.cursor {
		position: absolute;
		left: 523px;
		top: 173px;
	}

	.triad {
		position: absolute;
		left: 30px;
		bottom: 44px;
		font: 10px 'Liberation Sans', sans-serif;
	}

	.link .triad {
		left: 12px;
		bottom: 40px;
	}

	.sheets {
		display: flex;
		height: 15px;
		border-top: 1px solid #777;
		background: #f7f7f7;
		line-height: 13px;
	}

	.jump {
		width: 17px;
		border-right: 1px solid #888;
		background: #a9a9a9;
	}

	.jump svg {
		display: block;
		fill: #8b8b8b;
		stroke: #8b8b8b;
	}

	.sheet {
		padding: 0 9px;
		border-right: 1px solid #888;
		background: #d4d2d3;
	}

	.sheet.current {
		padding-left: 11px;
		background: #fff;
		font-weight: 700;
	}

	.sheet.last {
		padding-right: 16px;
	}

	.task-pane {
		position: absolute;
		top: 52px;
		right: 0;
		width: 21px;
		border-left: 1px solid #777;
		box-sizing: border-box;
		overflow: hidden;
		background: #d4d2d3;
	}

	.task-pane button {
		display: flex;
		align-items: center;
		width: 24px;
		height: 24px;
		padding-left: 2px;
		border-bottom: 1px solid #777;
		box-sizing: border-box;
	}

	.task-pane button.active {
		background: #fff;
	}

	.watermark {
		position: absolute;
		left: 616px;
		top: 402px;
		color: rgba(246, 251, 255, 0.8);
		font: 300 72px/80px 'Noto Sans CJK SC', sans-serif;
		white-space: nowrap;
		pointer-events: none;
	}

	.watermark span {
		font-family: 'Liberation Serif', serif;
		font-size: 50px;
	}
</style>
